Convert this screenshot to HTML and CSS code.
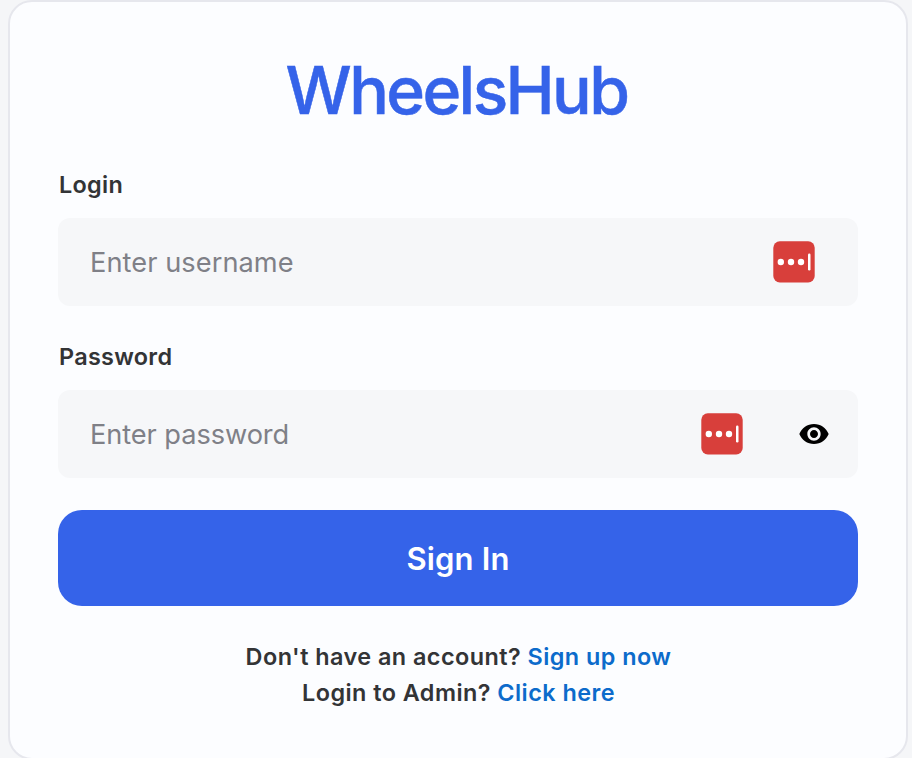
FILE: index.html
```html
<!DOCTYPE html>
<html lang="en">
<head>
<meta charset="utf-8">
<title>WheelsHub</title>
<link rel="stylesheet" href="styles.css">
</head>
<body>
<main class="card">
  <h1 class="logo">WheelsHub</h1>
  <form class="form">
    <label class="label" for="login">Login</label>
    <div class="field">
      <input class="input" id="login" type="text" placeholder="Enter username">
      <svg class="manager" viewBox="0 0 42 42"><rect x=".3" y=".3" width="41.4" height="41.2" rx="6.5" fill="#d83f3b"/><g fill="#fff"><circle cx="7.8" cy="21" r="3.2"/><circle cx="18" cy="21" r="3.2"/><circle cx="28" cy="21" r="3.2"/><rect x="35" y="12.5" width="2.5" height="17" rx="1.2"/></g></svg>
    </div>
    <label class="label" for="password">Password</label>
    <div class="field field-password">
      <input class="input input-password" id="password" type="password" placeholder="Enter password">
      <svg class="manager" viewBox="0 0 42 42"><rect x=".3" y=".3" width="41.4" height="41.2" rx="6.5" fill="#d83f3b"/><g fill="#fff"><circle cx="7.8" cy="21" r="3.2"/><circle cx="18" cy="21" r="3.2"/><circle cx="28" cy="21" r="3.2"/><rect x="35" y="12.5" width="2.5" height="17" rx="1.2"/></g></svg>
      <svg class="eye" viewBox="0 0 24 24"><path d="M12 4.5C7 4.5 2.73 7.61 1 12c1.73 4.39 6 7.5 11 7.5s9.27-3.11 11-7.5c-1.73-4.39-6-7.5-11-7.5zM12 17c-2.76 0-5-2.24-5-5s2.24-5 5-5 5 2.24 5 5-2.24 5-5 5zm0-8c-1.66 0-3 1.34-3 3s1.34 3 3 3 3-1.34 3-3-1.34-3-3-3z"/></svg>
    </div>
    <button class="submit" type="button">Sign In</button>
  </form>
  <p class="links">Don't have an account? <a class="link">Sign up now</a><br>Login to Admin? <a class="link">Click here</a></p>
</main>
</body>
</html>
```
FILE: styles.css
```css
* { box-sizing: border-box; }
body { margin: 0; height: 758px; overflow: hidden; background: #f5f6f8; font-family: Inter, sans-serif; color: #333436; }
.card { margin: 0 4px 0 8px; height: 760px; padding: 48px; border: 2px solid #e6e7ed; border-radius: 24px; background: #fcfdff; }
.logo { margin: 0; height: 116px; padding-right: 3px; line-height: 80px; text-align: center; font-weight: 500; font-size: 66px; letter-spacing: -2.6px; color: #3563e9; -webkit-text-stroke: .5px #3563e9; }
.label { display: block; height: 52px; padding-left: 1px; line-height: 38px; font-size: 23.4px; font-weight: 600; letter-spacing: .3px; }
.field { display: flex; align-items: center; height: 88px; margin-bottom: 32px; padding: 0 43px 0 32px; border-radius: 12px; background: #f6f7f9; }
.field-password { padding-right: 28px; }
.input { flex: 1; min-width: 0; height: 60px; padding: 0; border: 0; outline: 0; background: transparent; font: 400 27.2px Inter, sans-serif; letter-spacing: .07px; }
.input-password { letter-spacing: -.07px; }
.input::placeholder { color: #7f8087; opacity: 1; }
.manager { flex: none; width: 42px; height: 42px; }
.eye { flex: none; width: 32px; height: 32px; margin-left: 55px; }
.submit { display: block; width: 100%; height: 96px; padding: 1px 0 0; border: 0; border-radius: 24px; background: #3563e9; color: #fff; font: 600 31px Inter, sans-serif; letter-spacing: .15px; }
.links { margin: 33px 0 0; padding-left: 1px; text-align: center; font-size: 23.4px; line-height: 36px; font-weight: 600; letter-spacing: .46px; }
.link { color: #0c6bcb; }
```
